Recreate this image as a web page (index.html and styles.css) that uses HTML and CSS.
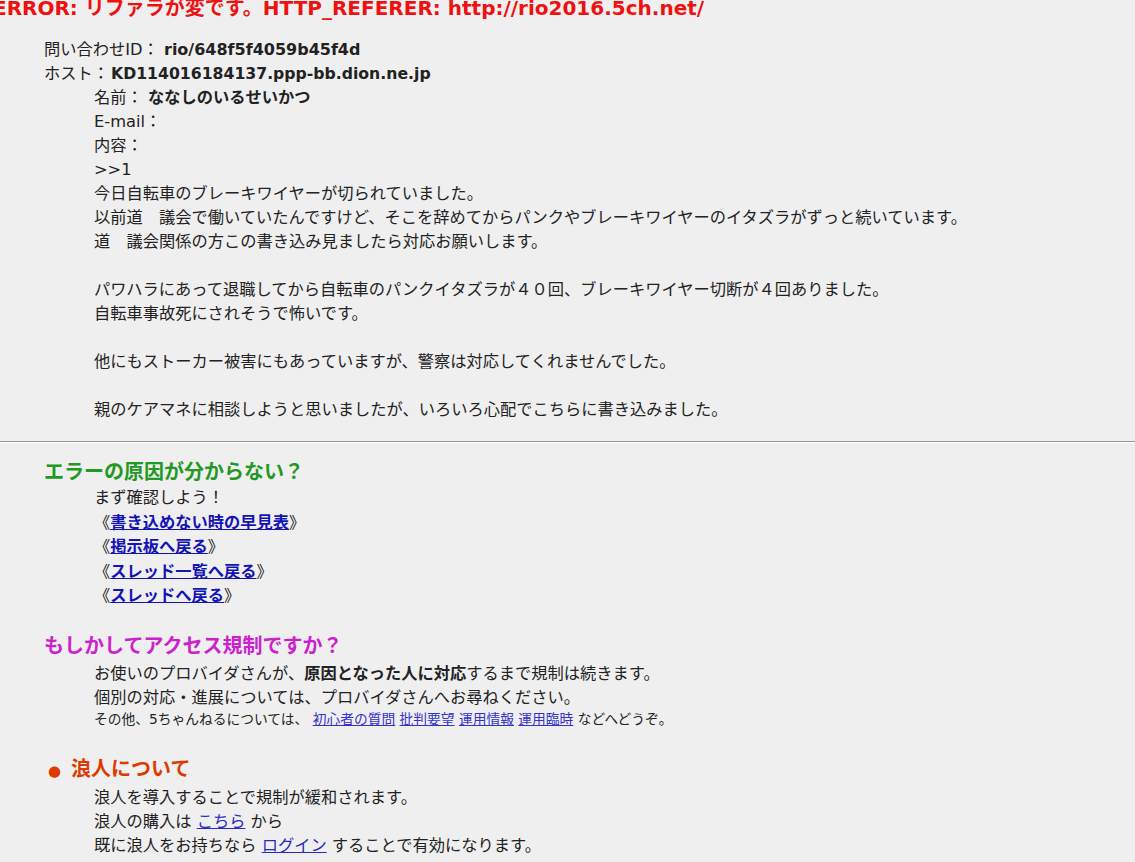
FILE: index.html
```html
<!DOCTYPE html>
<html lang="ja">
<head>
<meta charset="utf-8">
<title>ERROR</title>
<link rel="stylesheet" href="styles.css">
</head>
<body>
<h1 class="err">ERROR: リファラが変です。HTTP_REFERER: http://rio2016.5ch.net/</h1>
<div class="info">
  <div class="row">問い合わせID： <b class="lat">rio/648f5f4059b45f4d</b></div>
  <div class="row">ホスト：<b class="lat host">KD114016184137.ppp-bb.dion.ne.jp</b></div>
  <div class="post">
    <div>名前： <b>ななしのいるせいかつ</b></div>
    <div>E-mail：</div>
    <div>内容：</div>
    <div>&gt;&gt;1<br>今日自転車のブレーキワイヤーが切られていました。<br>以前道　議会で働いていたんですけど、そこを辞めてからパンクやブレーキワイヤーのイタズラがずっと続いています。<br>道　議会関係の方この書き込み見ましたら対応お願いします。<br><br>パワハラにあって退職してから自転車のパンクイタズラが４０回、ブレーキワイヤー切断が４回ありました。<br>自転車事故死にされそうで怖いです。<br><br>他にもストーカー被害にもあっていますが、警察は対応してくれませんでした。<br><br>親のケアマネに相談しようと思いましたが、いろいろ心配でこちらに書き込みました。</div>
  </div>
</div>
<hr class="sep">
<section class="sec sec-first">
  <h2 class="head green">エラーの原因が分からない？</h2>
  <div class="body links">
    <div>まず確認しよう！</div>
    <div>《<a href="#">書き込めない時の早見表</a>》</div>
    <div>《<a href="#">掲示板へ戻る</a>》</div>
    <div>《<a href="#">スレッド一覧へ戻る</a>》</div>
    <div>《<a href="#">スレッドへ戻る</a>》</div>
  </div>
</section>
<section class="sec sec-second">
  <h2 class="head magenta">もしかしてアクセス規制ですか？</h2>
  <div class="body">
    <div>お使いのプロバイダさんが、<b>原因となった人に対応</b>するまで規制は続きます。</div>
    <div>個別の対応・進展については、プロバイダさんへお尋ねください。</div>
    <div class="small">その他、5ちゃんねるについては、 <a href="#">初心者の質問</a> <a href="#">批判要望</a> <a href="#">運用情報</a> <a href="#">運用臨時</a> などへどうぞ。</div>
  </div>
</section>
<section class="sec sec-third">
  <h2 class="head orange"><span class="bullet">●</span>浪人について</h2>
  <div class="body">
    <div>浪人を導入することで規制が緩和されます。</div>
    <div>浪人の購入は <a href="#" class="plain">こちら</a> から</div>
    <div>既に浪人をお持ちなら <a href="#" class="plain">ログイン</a> することで有効になります。</div>
  </div>
</section>
</body>
</html>
```
FILE: styles.css
```css
html, body {
  margin: 0;
  padding: 0;
  background: #efefef;
}
body {
  font-family: "DejaVu Sans", "Noto Sans CJK JP", sans-serif;
  font-size: 16.25px;
  color: #222;
  overflow: hidden;
}
.err {
  margin: -4px 0 18px -7px;
  font-size: 20px;
  line-height: 24px;
  font-weight: bold;
  color: #ee1111;
  white-space: nowrap;
}
.info {
  padding-left: 44px;
  line-height: 24px;
}
.lat {
  font-size: 16px;
}
.host {
  font-size: 15.7px;
  margin-left: 2px;
}
.post {
  padding-left: 50px;
}
.sep {
  margin: 19px 0 0 0;
  height: 0;
  border: 0;
  border-top: 1px solid #999;
  border-bottom: 1px solid #fff;
}
.sec {
  padding-left: 44px;
}
.head {
  margin: 0;
  font-size: 20px;
  line-height: 26px;
  font-weight: bold;
}
.green { color: #229922; }
.magenta { color: #cc22cc; }
.orange { color: #dd3a00; }
.bullet {
  display: inline-block;
  font-size: 15px;
  margin: 0 10px 0 4px;
}
.body {
  padding-left: 50px;
  line-height: 24px;
}
.sec-first { margin-top: 16px; }
.sec-first .body { margin-top: 1px; line-height: 24.5px; }
.sec-second { margin-top: 24.5px; }
.sec-second .body { margin-top: 3px; }
.sec-third { margin-top: 28px; }
.sec-third .body { margin-top: 2px; }
.links a {
  color: #1414b4;
  font-weight: bold;
}
.small {
  font-size: 13.75px;
  line-height: 18px;
}
.small a {
  color: #3333cc;
}
a.plain {
  color: #2a2ac0;
}
```
